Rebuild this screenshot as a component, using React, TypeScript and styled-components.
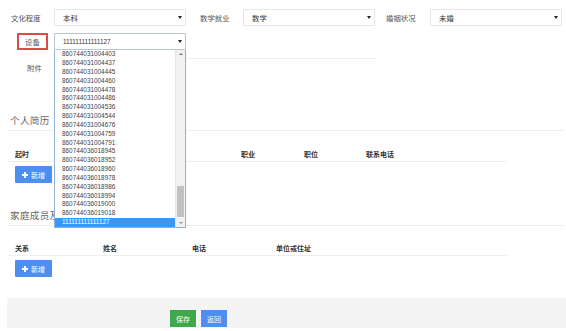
import React from "react";
import styled, { createGlobalStyle } from "styled-components";

const Global = createGlobalStyle`
  html, body { margin: 0; padding: 0; background: #fff; }
  body { font-family: "Liberation Sans", "Noto Sans CJK SC", sans-serif; }
`;

const Page = styled.div`
  width: 566px;
  height: 331px;
  overflow: hidden;
  position: relative;
  padding-top: 9px;
  box-sizing: border-box;
`;

const FormRow = styled.div<{ $mt?: number }>`
  display: flex;
  align-items: center;
  height: 17px;
  margin-top: ${(p) => p.$mt ?? 0}px;
  padding-left: 8px;
`;

const Label = styled.div<{ $w: number; $pl?: number }>`
  width: ${(p) => p.$w}px;
  box-sizing: border-box;
  padding-left: ${(p) => p.$pl ?? 0}px;
  font-size: 7.4px;
  color: #555;
  font-family: "Noto Sans CJK SC", sans-serif;
  white-space: nowrap;
`;

const BoxLabel = styled.div`
  margin-left: 9px;
  margin-right: 6px;
  width: 31px;
  height: 17px;
  box-sizing: border-box;
  border: 2px solid #dc4b47;
  display: flex;
  align-items: center;
  justify-content: center;
  font-size: 7.4px;
  color: #555;
  font-family: "Noto Sans CJK SC", sans-serif;
`;

const Select = styled.div<{ $open?: boolean }>`
  width: 132px;
  height: 17px;
  box-sizing: border-box;
  border: 1px solid ${(p) => (p.$open ? "#b9c4d4" : "#e6e6e6")};
  border-radius: 1px;
  display: flex;
  align-items: center;
  justify-content: space-between;
  padding: 0 3px 0 8px;
  font-size: ${(p) => (p.$open ? "6.4px" : "7.4px")};
  color: #333;
  font-family: "Liberation Sans", "Noto Sans CJK SC", sans-serif;
  background: #fff;
`;

const Caret = styled.span`
  width: 0;
  height: 0;
  border-left: 2px solid transparent;
  border-right: 2px solid transparent;
  border-top: 3px solid #222;
`;

const FieldWrap = styled.div`
  position: relative;
  width: 322px;
  height: 25px;
  border-bottom: 1px solid #eee;
  align-self: flex-start;
`;

const DropList = styled.div`
  position: absolute;
  left: 0;
  top: 17px;
  width: 132px;
  height: 178px;
  box-sizing: border-box;
  border: 1px solid #8fb0d8;
  border-top: none;
  background: #fff;
  display: flex;
  z-index: 5;
`;

const Options = styled.div`
  flex: 1;
  display: flex;
  flex-direction: column;
  justify-content: flex-end;
  overflow: hidden;
`;

const Option = styled.div<{ $sel?: boolean }>`
  height: 8.85px;
  line-height: 8.85px;
  padding-left: 7px;
  font-size: 6.4px;
  color: ${(p) => (p.$sel ? "#fff" : "#444")};
  background: ${(p) => (p.$sel ? "#3399ff" : "transparent")};
  font-family: "Liberation Sans", sans-serif;
`;

const Scroll = styled.div`
  width: 9px;
  background: #f1f1f1;
  display: flex;
  flex-direction: column;
  align-items: center;
  border-left: 1px solid #e8e8e8;
`;

const Arrow = styled.div<{ $up?: boolean }>`
  height: 8px;
  width: 9px;
  display: flex;
  align-items: center;
  justify-content: center;
  &::after {
    content: "";
    border-left: 2px solid transparent;
    border-right: 2px solid transparent;
    ${(p) => (p.$up ? "border-bottom: 2px solid #777;" : "border-top: 2px solid #999;")}
  }
`;

const Track = styled.div`
  flex: 1;
  width: 100%;
  display: flex;
  flex-direction: column;
  justify-content: flex-end;
  padding-bottom: 2px;
  box-sizing: border-box;
`;

const Thumb = styled.div`
  height: 31px;
  margin: 0 1px;
  background: #c1c1c1;
`;

const Section = styled.section<{ $mt: number }>`
  margin-top: ${(p) => p.$mt}px;
  padding-left: 8px;
`;

const Heading = styled.h3`
  margin: 0;
  height: 20px;
  line-height: 20px;
  padding-left: 2px;
  width: 555px;
  border-bottom: 1px solid #eee;
  font-size: 9.6px;
  font-weight: normal;
  color: #666;
  letter-spacing: 0.3px;
  font-family: "Noto Sans CJK SC", serif;
`;

const TableHead = styled.div<{ $cols: string; $mt: number }>`
  display: grid;
  grid-template-columns: ${(p) => p.$cols};
  width: 499px;
  height: 15px;
  margin-top: ${(p) => p.$mt}px;
  align-items: center;
  border-bottom: 1px solid #eee;
`;

const Th = styled.div`
  padding-left: 7px;
  font-size: 7px;
  font-weight: bold;
  color: #333;
  font-family: "Noto Sans CJK SC", sans-serif;
`;

const AddButton = styled.button`
  margin: 4px 0 0 7px;
  width: 37px;
  height: 17px;
  border: none;
  border-radius: 1px;
  background: #4d8ff0;
  color: #fff;
  font-size: 7px;
  font-family: "Noto Sans CJK SC", sans-serif;
  display: flex;
  align-items: center;
  justify-content: center;
  gap: 3px;
  padding: 0;
`;

const Plus = styled.span`
  position: relative;
  width: 6px;
  height: 6px;
  &::before, &::after {
    content: "";
    position: absolute;
    background: #fff;
  }
  &::before { left: 0; right: 0; top: 2px; height: 2px; }
  &::after { top: 0; bottom: 0; left: 2px; width: 2px; }
`;

const Footer = styled.div`
  margin: 21px 0 0 7px;
  height: 30px;
  background: #f4f4f4;
  display: flex;
  align-items: flex-end;
  gap: 5px;
  padding: 0 0 1px 163px;
  box-sizing: border-box;
`;

const FootButton = styled.button<{ $bg: string }>`
  width: 26px;
  height: 17px;
  border: none;
  background: ${(p) => p.$bg};
  color: #fff;
  font-size: 7px;
  padding: 0;
  font-family: "Noto Sans CJK SC", sans-serif;
`;

const items = [
  "860744031004403",
  "860744031004437",
  "860744031004445",
  "860744031004460",
  "860744031004478",
  "860744031004486",
  "860744031004536",
  "860744031004544",
  "860744031004676",
  "860744031004759",
  "860744031004791",
  "860744036018945",
  "860744036018952",
  "860744036018960",
  "860744036018978",
  "860744036018986",
  "860744036018994",
  "860744036019000",
  "860744036019018",
  "111111111111127",
];

export default function App() {
  return (
    <>
      <Global />
      <Page>
        <FormRow>
          <Label $w={46} $pl={3}>文化程度</Label>
          <Select>
            本科
            <Caret />
          </Select>
          <Label $w={57} $pl={14}>数学就业</Label>
          <Select>
            数学
            <Caret />
          </Select>
          <Label $w={55} $pl={11}>婚姻状况</Label>
          <Select>
            未婚
            <Caret />
          </Select>
        </FormRow>
        <FormRow $mt={7}>
          <BoxLabel>设备</BoxLabel>
          <FieldWrap>
            <Select $open>
              111111111111127
              <Caret />
            </Select>
            <DropList>
              <Options>
                {items.map((it, i) => (
                  <Option key={it} $sel={i === items.length - 1}>
                    {it}
                  </Option>
                ))}
              </Options>
              <Scroll>
                <Arrow $up />
                <Track>
                  <Thumb />
                </Track>
                <Arrow />
              </Scroll>
            </DropList>
          </FieldWrap>
        </FormRow>
        <FormRow $mt={9}>
          <Label $w={46} $pl={19}>附件</Label>
        </FormRow>

        <Section $mt={34}>
          <Heading>个人简历</Heading>
          <TableHead $cols="226px 63px 62px 148px" $mt={15}>
            <Th>起时</Th>
            <Th>职业</Th>
            <Th>职位</Th>
            <Th>联系电话</Th>
          </TableHead>
          <AddButton>
            <Plus />新增
          </AddButton>
        </Section>

        <Section $mt={22}>
          <Heading>家庭成员及</Heading>
          <TableHead $cols="88px 89px 84px 238px" $mt={14}>
            <Th>关系</Th>
            <Th>姓名</Th>
            <Th>电话</Th>
            <Th>单位或住址</Th>
          </TableHead>
          <AddButton>
            <Plus />新增
          </AddButton>
        </Section>

        <Footer>
          <FootButton $bg="#3ea84c">保存</FootButton>
          <FootButton $bg="#4d8ff0">返回</FootButton>
        </Footer>
      </Page>
    </>
  );
}
